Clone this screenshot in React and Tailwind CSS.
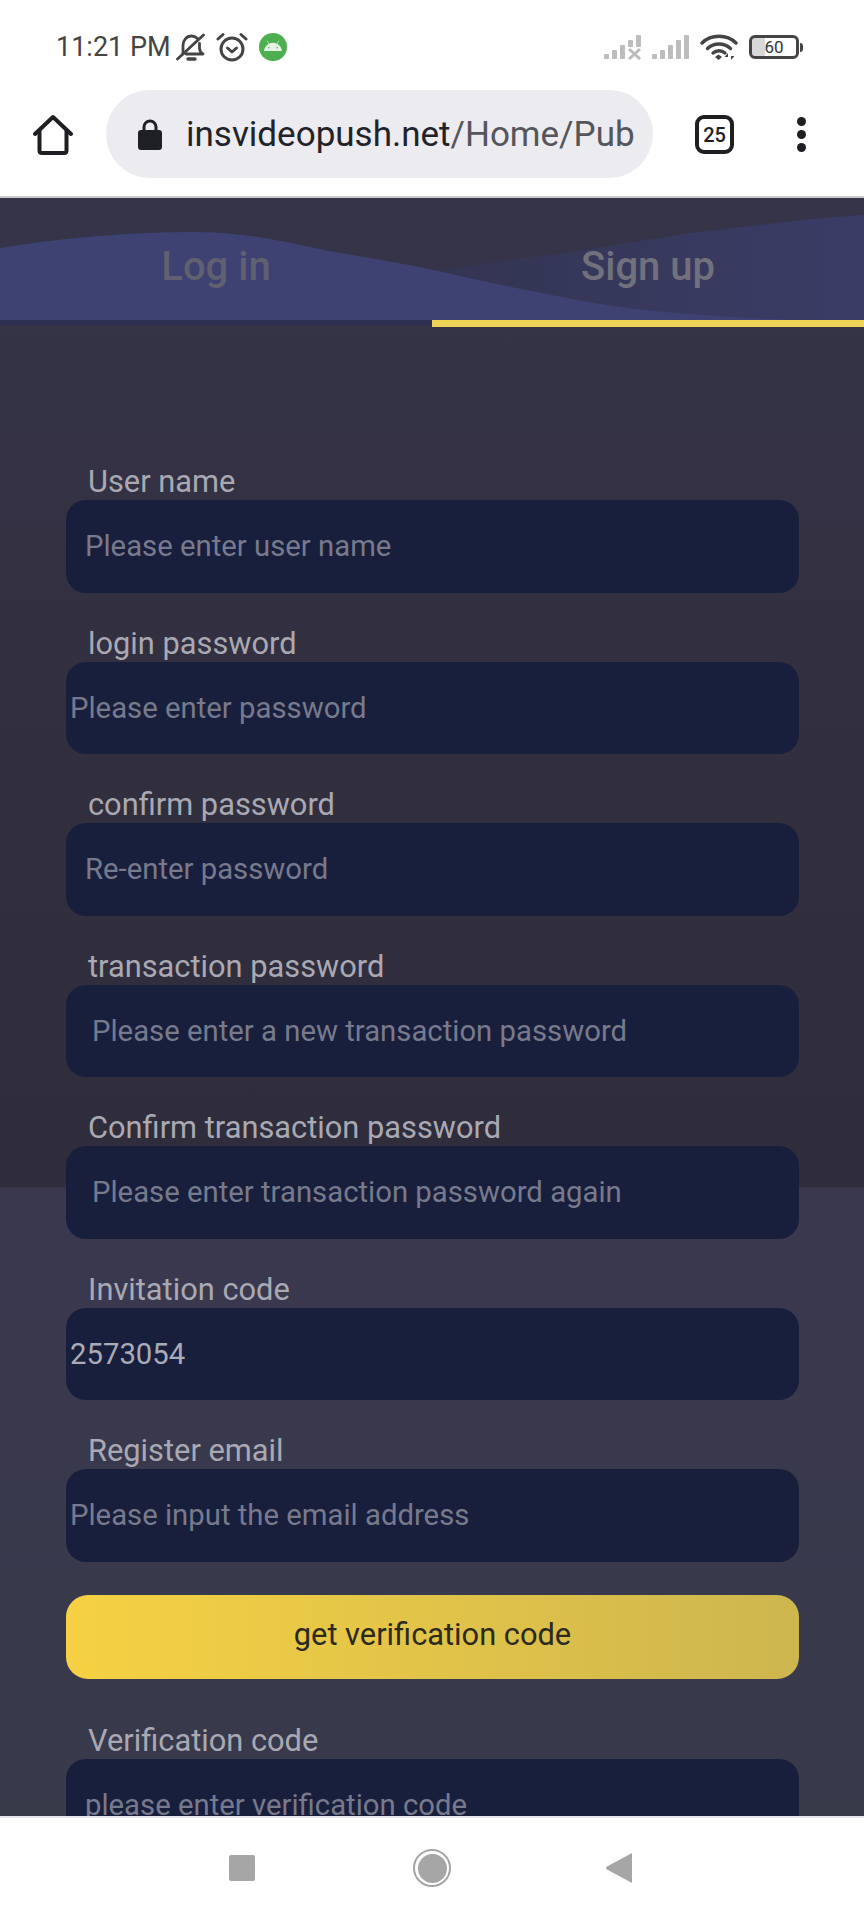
import React from "react";
import { FaAndroid } from "react-icons/fa";

const fields = [
  { label: "User name", placeholder: "Please enter user name", pad: "pl-[19px]" },
  { label: "login password", placeholder: "Please enter password", pad: "pl-[4px]" },
  { label: "confirm password", placeholder: "Re-enter password", pad: "pl-[19px]" },
  { label: "transaction password", placeholder: "Please enter a new transaction password", pad: "pl-[26px]" },
  { label: "Confirm transaction password", placeholder: "Please enter transaction password again", pad: "pl-[26px]" },
  { label: "Invitation code", value: "2573054", pad: "pl-[4px]" },
  { label: "Register email", placeholder: "Please input the email address", pad: "pl-[4px]" },
];

function BellOffIcon() {
  return (
    <svg width="30" height="30" viewBox="0 0 30 30" fill="none" stroke="#444" strokeWidth="2.800" strokeLinecap="round" strokeLinejoin="round">
      <path d="M7 22V13c0-4.500 3.500-9 8.500-9 2.400 0 4.500 1 6 2.500" />
      <path d="M23.500 11.500V16c0 2 1 4.500 3.500 6H10" />
      <path d="M1.500 27 27.500 3" />
      <path d="M12 27h7" strokeWidth="3.400" />
    </svg>
  );
}

function AlarmIcon() {
  return (
    <svg width="32" height="30" viewBox="0 0 32 30" fill="none" stroke="#444" strokeWidth="3" strokeLinecap="round" strokeLinejoin="round">
      <circle cx="16" cy="17" r="11" />
      <path d="M11.500 16 16 20l4.500-4" />
      <path d="M2 7l5-4.500M30 7l-5-4.500" />
    </svg>
  );
}

function SignalIcon({ crossed }) {
  return (
    <svg width="38" height="26" viewBox="0 0 38 26" fill="#bdbdbd">
      <rect x="0" y="20" width="5" height="5" rx="1" />
      <rect x="8" y="16" width="5" height="9" rx="1" />
      <rect x="16" y="11" width="5" height="14" rx="1" />
      {crossed ? (
        <>
          <rect x="24" y="6" width="5" height="7" rx="1" />
          <rect x="32" y="1" width="5" height="12" rx="1" />
          <path d="M25 15l11 10M36 15 25 25" stroke="#bdbdbd" strokeWidth="3" fill="none" />
        </>
      ) : (
        <>
          <rect x="24" y="6" width="5" height="19" rx="1" />
          <rect x="32" y="1" width="5" height="24" rx="1" />
        </>
      )}
    </svg>
  );
}

function WifiIcon() {
  return (
    <svg width="38" height="28" viewBox="0 0 38 28" fill="none" stroke="#444">
      <path d="M2 10C11 1 27 1 36 10" strokeWidth="3.400" strokeLinecap="round" />
      <path d="M7.500 15.500c6.500-6 16.500-6 23 0" strokeWidth="3.400" strokeLinecap="round" />
      <path d="M13 20c3.500-3 8.500-3 12 0" strokeWidth="3.400" strokeLinecap="round" />
      <path d="M15 24l3.500-2.500L22 24l-3.500 3z" fill="#444" stroke="none" />
      <path d="M28 27v-7l-3.500 4h3.500zM31 20v7l3.500-4H31z" fill="#444" stroke="none" />
    </svg>
  );
}

function HomeIcon() {
  return (
    <svg width="40" height="41" viewBox="0 0 40 41" fill="none" stroke="#1f1f23" strokeWidth="4" strokeLinecap="round" strokeLinejoin="round">
      <path d="M2 20 20 3l18 17" />
      <path d="M6.500 17v19.500c0 1.500 1 2.500 2.500 2.500h22c1.500 0 2.500-1 2.500-2.500V17" />
    </svg>
  );
}

function LockIcon() {
  return (
    <svg width="24" height="31" viewBox="0 0 24 31" fill="#1f2026">
      <path d="M6 12V8a6 6 0 0 1 12 0v4" fill="none" stroke="#1f2026" strokeWidth="3" />
      <rect x="0" y="11" width="24" height="20" rx="3" />
    </svg>
  );
}

export default function App() {
  return (
    <div className="flex flex-col h-[1920px] w-[864px] overflow-hidden bg-white font-['Roboto',sans-serif]">
      {/* Phone status bar */}
      <div className="flex h-[90px] items-center justify-between pt-[4px] pl-[56px] pr-[61px]">
        <div className="flex items-center">
          <span className="text-[27px] leading-none text-[#444444]">11:21 PM</span>
          <span className="ml-[5px] flex"><BellOffIcon /></span>
          <span className="ml-[10px] flex"><AlarmIcon /></span>
          <span className="ml-[11px] flex h-[28px] w-[28px] items-center justify-center rounded-full bg-[#4caf50]">
            <FaAndroid className="text-[18px] text-[#e4f3e4]" />
          </span>
        </div>
        <div className="flex items-center">
          <SignalIcon crossed />
          <span className="ml-[10px] flex"><SignalIcon /></span>
          <span className="ml-[10px] flex"><WifiIcon /></span>
          <span className="ml-[11px] flex items-center">
            <span className="flex h-[24px] w-[50px] items-center justify-center rounded-[6px] border-[3px] border-[#444444] bg-[linear-gradient(90deg,#d8d8d8_30%,#ffffff_30%)] text-[17px] leading-none text-[#333333]">60</span>
            <span className="ml-[1px] h-[9px] w-[3px] rounded-r-sm bg-[#444444]"></span>
          </span>
        </div>
      </div>

      {/* Browser toolbar */}
      <div className="flex h-[106px] items-start pl-[33px]">
        <span className="mt-[24px] flex"><HomeIcon /></span>
        <div className="ml-[33px] flex h-[88px] w-[547px] items-center rounded-full bg-[#ebebf0] pl-[32px]">
          <LockIcon />
          <span className="ml-[24px] text-[35px] leading-none whitespace-nowrap text-[#222329]">
            insvideopush.net<span className="text-[#55565c]">/Home/Pub</span>
          </span>
        </div>
        <div className="ml-[42px] mt-[25px] flex h-[39px] w-[39px] items-center justify-center rounded-[9px] border-[4px] border-[#1f1f23] text-[20px] font-medium leading-none text-[#1f1f23]">25</div>
        <div className="ml-[63px] mt-[27px] flex flex-col gap-[4px]">
          <span className="h-[9px] w-[9px] rounded-full bg-[#1f1f23]"></span>
          <span className="h-[9px] w-[9px] rounded-full bg-[#1f1f23]"></span>
          <span className="h-[9px] w-[9px] rounded-full bg-[#1f1f23]"></span>
        </div>
      </div>
      <div className="h-[2px] bg-[#c9c9cc]"></div>

      {/* Page */}
      <main className="flex-1 min-h-0 overflow-hidden bg-[linear-gradient(180deg,#353449_0px,#32303f_500px,#2f2d3b_989px,#3a384f_990px,#383a4a_1617px)]">
        {/* Tabs */}
        <div className="relative flex h-[129px]">
          <svg className="absolute left-0 top-0 h-[122px] w-[864px]" viewBox="0 0 864 122" preserveAspectRatio="none">
            <defs>
              <linearGradient id="backWave" x1="0" x2="1" y1="0" y2="0">
                <stop offset="0" stopColor="#343553" />
                <stop offset="1" stopColor="#3a3c66" />
              </linearGradient>
            </defs>
            <path d="M440 72C480 66 520 60 567 55 600 50 630 44 660 40 695 34 730 30 760 27 800 22 830 19 864 17V122H440Z" fill="url(#backWave)" />
            <path d="M0 50C60 40 130 34 193 34 230 34 265 39 300 47 345 57 390 62 433 72 490 85 550 97 600 106 640 112 690 118 800 122H0Z" fill="#3d4272" />
          </svg>
          <div className="absolute bottom-[2px] left-0 h-[5px] w-[432px] bg-[#2e2e55]"></div>
          <button className="relative flex h-full w-[432px] items-start justify-center pt-[44px] text-[40px] font-medium leading-[50px] text-[#5f6070]">Log in</button>
          <button className="relative flex h-full w-[432px] items-start justify-center border-b-[7px] border-[#f0d458] pt-[44px] text-[40px] font-medium leading-[50px] text-[#70717c]">Sign up</button>
        </div>

        {/* Form */}
        <div className="flex flex-col pl-[66px] pr-[65px] pt-[136px]">
          {fields.map((field) => (
            <div key={field.label} className="mb-[32px] flex flex-col">
              <label className="pl-[22px] text-[30.800px] leading-[37px] text-[#a9a9b3]">{field.label}</label>
              <input
                readOnly
                value={field.value || ""}
                placeholder={field.placeholder}
                className={`h-[92.5px] w-full rounded-[20px] bg-[#181f3d] text-[29.300px] text-[#a9abb8] outline-none placeholder:text-[#777a8c] ${field.pad}`}
              />
            </div>
          ))}
          <button className="mt-[1px] h-[84px] w-full rounded-[22px] bg-[linear-gradient(90deg,#f6d143,#cdb64e)] pb-[2px] text-[30.800px] text-[#2c2a1c]">get verification code</button>
          <div className="mt-[43px] flex flex-col">
            <label className="pl-[22px] text-[30.800px] leading-[37px] text-[#a9a9b3]">Verification code</label>
            <input
              readOnly
              placeholder="please enter verification code"
              className="h-[92.5px] w-full rounded-[20px] bg-[#181f3d] pl-[19px] text-[29.300px] outline-none placeholder:text-[#777a8c]"
            />
          </div>
        </div>
      </main>

      {/* Android nav bar */}
      <div className="flex h-[104px] items-center border-t-[2px] border-[#e6e6ee] pb-[2px] pl-[229px]">
        <span className="h-[26px] w-[26px] rounded-[2px] bg-[#a6a6a6]"></span>
        <span className="ml-[158px] flex h-[38px] w-[38px] items-center justify-center rounded-full border-[2px] border-[#a6a6a6]">
          <span className="h-[29px] w-[29px] rounded-full bg-[#a6a6a6]"></span>
        </span>
        <svg className="ml-[155px]" width="26" height="30" viewBox="0 0 26 30">
          <path d="M26 0v30L1 16.500q-2-1.500 0-3z" fill="#a6a6a6" />
        </svg>
      </div>
    </div>
  );
}
